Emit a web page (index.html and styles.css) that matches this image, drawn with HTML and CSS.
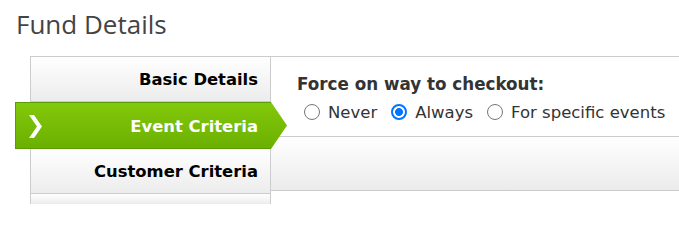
FILE: index.html
```html
<!DOCTYPE html>
<html>
<head>
<meta charset="utf-8">
<link rel="stylesheet" href="styles.css">
</head>
<body>
<h1 class="title">Fund Details</h1>
<div class="panel">
  <ul class="nav">
    <li class="nav-item">Basic Details</li>
    <li class="nav-item active">
      <svg class="chevron" width="13" height="23" viewBox="0 0 13 23"><polygon points="0,0 5,0 13,11.5 5,23 0,23 8,11.5" fill="#fff"/></svg>
      <span>Event Criteria</span>
    </li>
    <li class="nav-item">Customer Criteria</li>
    <li class="nav-item last"></li>
  </ul>
  <div class="content">
    <div class="form-section">
      <div class="field-label">Force on way to checkout:</div>
      <div class="options">
        <label class="option"><input type="radio" name="force"> Never</label>
        <label class="option"><input type="radio" name="force" checked> Always</label>
        <label class="option"><input type="radio" name="force"> For specific events</label>
      </div>
    </div>
    <div class="band"></div>
  </div>
</div>
</body>
</html>
```
FILE: styles.css
```css
html, body {
  margin: 0;
  padding: 0;
  background: #fff;
  overflow: hidden;
}
body {
  height: 204px;
  font-family: "DejaVu Sans", Verdana, sans-serif;
  color: #333;
}
.title {
  margin: 0 0 17px 0;
  padding: 9px 0 0 16px;
  font-family: "Open Sans", "Noto Sans", sans-serif;
  font-weight: normal;
  font-size: 26px;
  line-height: 30px;
  color: #444;
}
.panel {
  display: flex;
  margin-left: 30px;
  border-top: 1px solid #ccc;
}
.nav {
  list-style: none;
  margin: 0;
  padding: 0;
  width: 239px;
  flex: none;
  border-left: 1px solid #ccc;
  border-right: 1px solid #ccc;
}
.nav-item {
  height: 44px;
  line-height: 46px;
  border-bottom: 1px solid #ccc;
  background: linear-gradient(#ffffff, #ececec);
  text-align: right;
  padding-right: 12px;
  font-weight: bold;
  font-size: 16.4px;
  color: #000;
}
.nav-item.last {
  height: 10px;
  border-bottom: none;
}
.nav-item.active {
  position: relative;
  display: flex;
  align-items: center;
  justify-content: space-between;
  height: 45px;
  line-height: normal;
  margin: 0 -1px 0 -16px;
  padding: 0 13px 0 13px;
  border: 1px solid #5c9a08;
  border-right: none;
  background: linear-gradient(#82c80b, #6cb000);
  color: #fff;
}
.nav-item.active span {
  padding-top: 2px;
}
.nav-item.active::after {
  content: "";
  position: absolute;
  left: 100%;
  top: -1px;
  width: 16px;
  height: 47px;
  background: linear-gradient(#82c80b, #6cb000);
  clip-path: polygon(0 0, 100% 50%, 0 100%);
}
.chevron {
  display: block;
  margin-top: 1px;
}
.content {
  flex: 1;
  min-width: 0;
}
.form-section {
  box-sizing: border-box;
  height: 80px;
  border-bottom: 1px solid #ccc;
  padding-left: 26px;
  padding-top: 17px;
}
.field-label {
  font-weight: bold;
  font-size: 16.75px;
  line-height: 20px;
  color: #333;
}
.options {
  display: flex;
  gap: 14px;
  padding-left: 7px;
  margin-top: 9px;
  font-size: 16.5px;
  line-height: 20px;
}
.option {
  display: flex;
  align-items: center;
  gap: 8px;
  white-space: nowrap;
}
.option input {
  appearance: none;
  -webkit-appearance: none;
  box-sizing: border-box;
  width: 16px;
  height: 16px;
  margin: 0 0 3px 0;
  border: 1.5px solid #767676;
  border-radius: 50%;
  background: #fff;
}
.option input:checked {
  border: 2px solid #0075ff;
  background: radial-gradient(circle, #0075ff 0, #0075ff 3.6px, #fff 4.2px);
}
.band {
  height: 53px;
  border-bottom: 1px solid #ccc;
  background: linear-gradient(#ffffff, #ebebeb);
}
```
